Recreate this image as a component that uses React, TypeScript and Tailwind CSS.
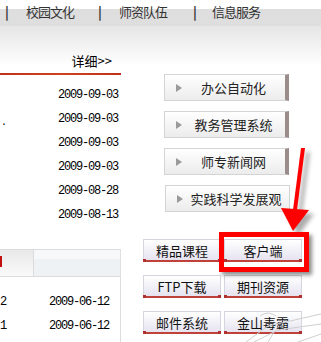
import React from "react";

const cjk = { fontFamily: '"Noto Sans CJK SC", "Noto Sans", sans-serif' };
const mono = { fontFamily: '"Liberation Mono", "Noto Sans CJK SC", monospace' };

function Tri() {
  return (
    <svg width="6" height="8" viewBox="0 0 6 8" className="shrink-0">
      <path d="M0 0 L6 4 L0 8 Z" fill="#9a9a9a" />
    </svg>
  );
}

function SysBtn({ label, noBorder }: { label: string; noBorder?: boolean }) {
  return (
    <div
      className={`flex h-[27px] w-[125px] items-center border border-[#d4d4d4] bg-gradient-to-b from-[#ffffff] to-[#ececec] ${noBorder ? "" : "border-r-[4px] border-r-[#9b8c8c]"}`}
    >
      <div className="ml-[11px]">
        <Tri />
      </div>
      <div className="flex-1 text-center text-[13px] leading-none text-[#222]" style={cjk}>
        {label}
      </div>
    </div>
  );
}

function SmallBtn({ label }: { label: string }) {
  return (
    <div className="relative flex h-[23px] w-[78px] items-center justify-center border border-[#d6d4de] border-b-[2px] border-b-[#c0403a] bg-gradient-to-b from-[#ffffff] to-[#e6e3f0] text-[13px] leading-none text-[#111]" style={cjk}>
      {label}
      <span className="absolute bottom-[-2px] left-[-1px] h-[3px] w-[3px] bg-[#b03030]" />
      <span className="absolute bottom-[-2px] right-[-1px] h-[3px] w-[3px] bg-[#b03030]" />
    </div>
  );
}

const dates1 = ["2009-09-03", "2009-09-03", "2009-09-03", "2009-09-03", "2009-08-28", "2009-08-13"];

export default function App() {
  return (
    <div className="relative h-[342px] w-[321px] overflow-hidden bg-white">
      {/* header */}
      <div className="relative h-[26px] bg-white">
        <div
          className="absolute left-0 right-0 top-[9px] h-[17px]"
          style={{
            backgroundImage:
              "radial-gradient(circle, #dcdcdc 0.7px, transparent 0.8px)",
            backgroundSize: "2px 2px",
          }}
        />
        <div className="relative flex h-[26px] items-start pt-[4px] text-[13px] leading-[16px] tracking-[-1px] text-[#333]" style={cjk}>
          <span className="ml-[5px] w-[21px] font-bold">|</span>
          <span className="w-[72px]">校园文化</span>
          <span className="w-[21px] font-bold">|</span>
          <span className="w-[74px]">师资队伍</span>
          <span className="w-[19px] font-bold">|</span>
          <span>信息服务</span>
        </div>
      </div>
      <div className="h-[40px] bg-gradient-to-b from-[#e6e6e6] to-[#ffffff]" />

      <div className="absolute left-0 top-[26px] flex w-full">
        {/* left column */}
        <div className="w-[121px] shrink-0">
          <div className="flex h-[47px] items-end justify-end pb-[6px] pr-[9px] text-[13px] leading-none text-[#000]" style={cjk}>
            详细&gt;&gt;
          </div>
          <div className="h-[2px] bg-gradient-to-r from-[#c0301a] via-[#d0401e] to-[#c0301a]" />
          <div className="pt-[8px]">
            {dates1.map((d, i) => (
              <div key={i} className="relative flex h-[24px] items-center justify-end pr-[3px] text-[12px] leading-none tracking-[-1.2px] text-black" style={mono}>
                {i === 1 && <span className="absolute left-[1px] top-[11px] text-[10px]">.</span>}
                {d}
              </div>
            ))}
          </div>
          <div className="mt-[22px] flex h-[27px] border-t border-[#dcdcdc]">
            <div className="relative w-[34px] border-r border-[#dcdcdc] bg-gradient-to-b from-[#e8e8e8] to-[#fafafa]">
              <span className="absolute left-0 top-[6px] h-[11px] w-[2px] bg-[#c01010]" />
            </div>
            <div className="flex-1 border-r border-[#e0e0e0] bg-[#eef2f5]">
              <div className="h-[9px] bg-[#f6f8fa]" />
            </div>
          </div>
          <div className="border-r border-[#dcdcdc] border-t border-t-[#dcdcdc] pt-[13px]">
            {["2", "1", "7"].map((n, i) => (
              <div key={i} className="flex h-[24px] items-center justify-between pr-[11px] text-[12px] leading-none text-black" style={mono}>
                <span className="tracking-[-1.2px]">{n}</span>
                <span className="tracking-[-1.2px]">{i === 2 ? "2009-05-07" : "2009-06-12"}</span>
              </div>
            ))}
          </div>
        </div>

        {/* right column */}
        <div className="ml-[22px] flex flex-col">
          <div className="ml-[21px] mt-[48px] flex flex-col gap-[10px]">
            <SysBtn label="办公自动化" />
            <SysBtn label="教务管理系统" />
            <SysBtn label="师专新闻网" />
            <div className="ml-[1px]">
              <SysBtn label="实践科学发展观" noBorder />
            </div>
          </div>
          <div className="mt-[27px] grid grid-cols-[78px_78px] gap-x-[3px] gap-y-[13px]">
            <SmallBtn label="精品课程" />
            <SmallBtn label="客户端" />
            <SmallBtn label="FTP下载" />
            <SmallBtn label="期刊资源" />
            <SmallBtn label="邮件系统" />
            <SmallBtn label="金山毒霸" />
          </div>
        </div>
      </div>

      {/* faint background drawing */}
      <svg className="absolute left-[238px] top-[310px]" width="83" height="32" viewBox="0 0 83 32">
        <g stroke="#cfcfcf" strokeWidth="1" fill="none">
          <path d="M22 6 Q30 0 38 6" />
          <path d="M8 32 L30 16 L83 4" />
          <path d="M16 32 L40 20 L83 14" />
          <path d="M60 32 L83 24" />
          <path d="M30 32 L36 22" />
        </g>
      </svg>

      {/* annotation: red arrow + box */}
      <svg className="absolute left-[270px] top-[140px]" width="51" height="100" viewBox="0 0 51 100">
        <defs>
          <filter id="sh" x="-50%" y="-50%" width="200%" height="200%">
            <feGaussianBlur stdDeviation="2" />
          </filter>
        </defs>
        <g transform="translate(4,4)" fill="#777" opacity="0.6" filter="url(#sh)">
          <path d="M32 8 L36 8 L28 70 L24 70 Z" />
          <path d="M12 68 L40 70 L24 92 Z" />
        </g>
        <path d="M31 8 L35 8 L27 70 L23 70 Z" fill="#ff0000" />
        <path d="M11 68 L39 70 L23 91 Z" fill="#ff0000" />
      </svg>
      <div className="absolute left-[219px] top-[232px] h-[40px] w-[90px] border-[5px] border-[#ff0000] shadow-[3px_3px_4px_rgba(0,0,0,0.45)]" />
    </div>
  );
}
